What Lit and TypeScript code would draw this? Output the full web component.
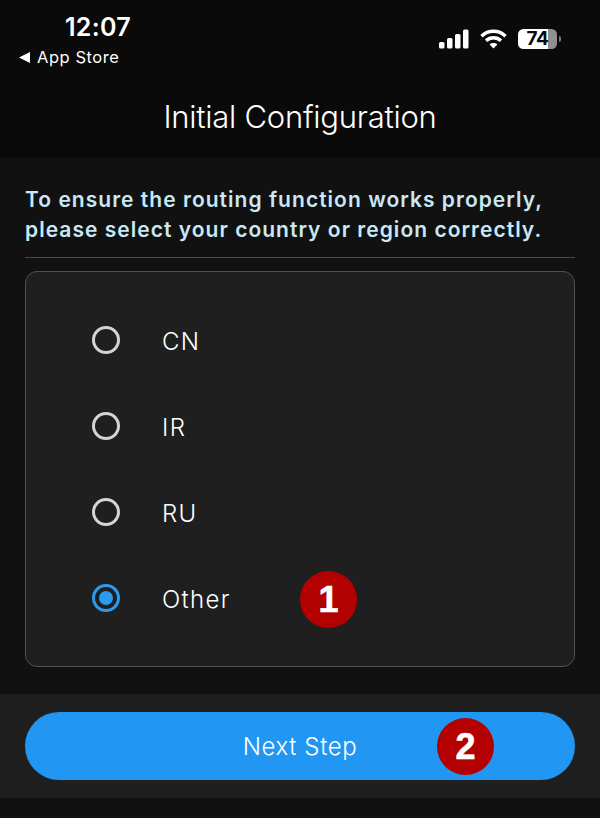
import { LitElement, html, css } from 'lit';
import { customElement, state } from 'lit/decorators.js';

@customElement('app-root')
export class AppRoot extends LitElement {
  @state() private selected = 'Other';

  private options = ['CN', 'IR', 'RU', 'Other'];

  static styles = css`
    :host {
      display: block;
      width: 600px;
      height: 818px;
      position: relative;
      overflow: hidden;
      background: #111111;
      font-family: Inter, 'Noto Sans', sans-serif;
      color: #fff;
    }

    .top {
      height: 158px;
      box-sizing: border-box;
      background: #0a0a0a;
      display: flex;
      flex-direction: column;
    }

    .status {
      height: 80px;
      display: flex;
      justify-content: space-between;
      padding: 12px 39px 0 19px;
      box-sizing: border-box;
    }

    .left {
      display: flex;
      flex-direction: column;
    }

    .time {
      font-size: 25px;
      line-height: 30px;
      font-weight: 600;
      padding-left: 46px;
      letter-spacing: 0.3px;
    }

    .back {
      display: flex;
      align-items: center;
      gap: 7px;
      font-size: 16.5px;
      line-height: 24px;
      font-weight: 400;
      margin-top: 3px;
      letter-spacing: 0.55px;
    }

    .right {
      display: flex;
      align-items: center;
      height: 54px;
      gap: 11px;
    }

    .battery {
      width: 39px;
      height: 20px;
      border-radius: 5.5px;
      background: linear-gradient(to right, #fff 30px, #8f8f8f 30px);
      color: #0a0a0a;
      font-size: 19px;
      line-height: 20px;
      font-weight: 700;
      letter-spacing: -0.3px;
      text-align: center;
      position: relative;
      margin-right: 4px;
    }

    .battery::after {
      content: '';
      position: absolute;
      left: 40.5px;
      top: 7px;
      width: 2px;
      height: 6px;
      border-radius: 0 3px 3px 0;
      background: #777;
    }

    .title {
      text-align: center;
      font-size: 31px;
      line-height: 40px;
      font-weight: 300;
      letter-spacing: -0.25px;
      margin-top: 17px;
    }

    .body {
      height: 536px;
      box-sizing: border-box;
      padding: 27px 25px 0;
      display: flex;
      flex-direction: column;
    }

    .hint {
      font-size: 21px;
      line-height: 30px;
      font-weight: 600;
      color: #c8e8f5;
      letter-spacing: 1.03px;
      white-space: nowrap;
      height: 72px;
      border-bottom: 1px solid #4a4a4a;
      margin-bottom: 13px;
    }

    .card {
      height: 396px;
      box-sizing: border-box;
      background: #1f1f1f;
      border: 1.5px solid #505050;
      border-radius: 12px;
      padding: 25px 0 0 66px;
      position: relative;
    }

    .option {
      display: flex;
      align-items: center;
      height: 86px;
      gap: 42px;
      font-size: 24px;
      font-weight: 300;
      letter-spacing: 1.35px;
      color: #fff;
      cursor: pointer;
    }

    .option .label {
      padding-top: 2px;
    }

    .radio {
      width: 28px;
      height: 28px;
      box-sizing: border-box;
      border: 3px solid #d4d4d4;
      border-radius: 50%;
      display: flex;
      align-items: center;
      justify-content: center;
    }

    .radio.on {
      border-color: #2b9bf0;
    }

    .radio.on::after {
      content: '';
      width: 14px;
      height: 14px;
      border-radius: 50%;
      background: #2b9bf0;
    }

    .bar {
      height: 104px;
      box-sizing: border-box;
      background: #1f1f1f;
      padding: 18px 25px 0;
    }

    .next {
      height: 68px;
      border-radius: 34px;
      background: #2196f3;
      display: flex;
      align-items: center;
      justify-content: center;
      font-size: 24px;
      font-weight: 300;
      letter-spacing: 0.6px;
      color: #fff;
    }

    .badge {
      position: absolute;
      width: 57px;
      height: 57px;
      border-radius: 50%;
      background: #b30000;
      display: flex;
      align-items: center;
      justify-content: center;
      font-family: 'Liberation Sans', Arial, sans-serif;
      font-size: 36px;
      font-weight: 700;
      color: #fff;
      -webkit-text-stroke: 0.6px #fff;
    }

    .b1 {
      left: 300px;
      top: 571px;
    }

    .b2 {
      left: 437px;
      top: 718px;
    }
  `;

  private signal() {
    return html`<svg width="30" height="20" viewBox="0 0 30 20" fill="#fff">
      <rect x="0" y="13" width="5.5" height="6.5" rx="1.5"></rect>
      <rect x="8" y="9" width="5.5" height="10.5" rx="1.5"></rect>
      <rect x="16" y="5" width="5.5" height="14.5" rx="1.5"></rect>
      <rect x="24" y="0.5" width="5.5" height="19" rx="1.5"></rect>
    </svg>`;
  }

  private wifi() {
    return html`<svg width="27" height="20" viewBox="0 0 27 20" fill="none" stroke="#fff" stroke-width="3.4">
      <path d="M1.5 7.2C8.2 0.6 18.8 0.6 25.5 7.2"></path>
      <path d="M6 11.8C10.2 7.8 16.8 7.8 21 11.8"></path>
      <path d="M13.5 19.4L9.6 15.4C11.8 13.6 15.2 13.6 17.4 15.4Z" fill="#fff" stroke="none"></path>
    </svg>`;
  }

  render() {
    return html`
      <div class="top">
        <div class="status">
          <div class="left">
            <div class="time">12:07</div>
            <div class="back">
              <svg width="11" height="11" viewBox="0 0 11 11" fill="#fff"><path d="M0 5.5L11 0V11Z"></path></svg>
              App Store
            </div>
          </div>
          <div class="right">${this.signal()}${this.wifi()}<div class="battery">74</div></div>
        </div>
        <div class="title">Initial Configuration</div>
      </div>
      <div class="body">
        <div class="hint">To ensure the routing function works properly,<br />please select your country or region correctly.</div>
        <div class="card">
          ${this.options.map(
            (o) => html`<div class="option" @click="${() => (this.selected = o)}">
              <span class="radio ${this.selected === o ? 'on' : ''}"></span>
              <span class="label">${o}</span>
            </div>`
          )}
        </div>
      </div>
      <div class="bar"><div class="next">Next Step</div></div>
      <div class="badge b1">1</div>
      <div class="badge b2">2</div>
    `;
  }
}
